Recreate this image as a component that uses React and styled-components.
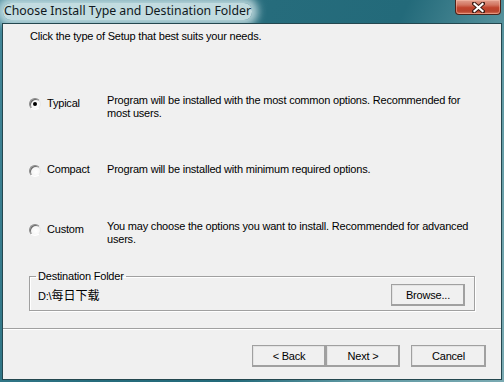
import React from "react";
import styled, { createGlobalStyle } from "styled-components";

const GlobalStyle = createGlobalStyle`
  html, body {
    margin: 0;
    padding: 0;
    overflow: hidden;
  }
  body {
    font-family: "Liberation Sans", Arial, sans-serif;
    font-size: 11px;
    letter-spacing: -0.2px;
    color: #000;
  }
`;

const Frame = styled.div`
  width: 504px;
  height: 382px;
  box-sizing: border-box;
  display: flex;
  flex-direction: column;
  padding: 0 2px 2px 2px;
  background: linear-gradient(115deg, #44889a 0%, #266c7c 40%, #236a7a 60%, #5e98a2 78%, #7aaab2 100%);
`;

const TitleBar = styled.div`
  height: 23px;
  flex: none;
  display: flex;
  align-items: flex-start;
  justify-content: space-between;
  margin: 0 -2px;
`;

const Caption = styled.span`
  margin: 3px 0 0 3px;
  padding: 0 1px;
  height: 17px;
  line-height: 16px;
  font-family: "Noto Sans", "Open Sans", sans-serif;
  font-size: 12.3px;
  letter-spacing: 0;
  color: #101820;
  border-radius: 8px;
  background: rgba(206, 228, 231, 0.92);
  box-shadow: 0 0 8px 6px rgba(206, 228, 231, 0.85);
  white-space: nowrap;
`;

const CloseButton = styled.div`
  width: 46px;
  height: 15px;
  margin-right: 3px;
  box-sizing: border-box;
  display: flex;
  align-items: center;
  justify-content: center;
  border: 1px solid #4d2219;
  border-top: none;
  border-radius: 0 0 4px 4px;
  background: linear-gradient(180deg, #e2a08f 0%, #d27561 35%, #c0442d 55%, #b8432c 80%, #d7755a 100%);
  box-shadow: inset 0 0 0 1px rgba(255, 200, 180, 0.45);
`;

const Client = styled.div`
  flex: 1;
  display: flex;
  flex-direction: column;
  border: 1px solid #24474f;
  background: #f0f0f0;
`;

const Heading = styled.div`
  margin: 6px 0 0 27px;
  line-height: 13px;
  white-space: nowrap;
`;

const Option = styled.div`
  display: flex;
  align-items: flex-start;
  margin: ${(p) => p.$top}px 0 0 26px;
`;

const Radio = styled.span`
  width: 12px;
  height: 12px;
  flex: none;
  box-sizing: border-box;
  margin-top: ${(p) => (p.$multi ? 4 : 2)}px;
  border-radius: 50%;
  border: 1px solid;
  border-color: #8a8a8a #e8e8e8 #ffffff #8a8a8a;
  background: radial-gradient(circle at 60% 60%, #ffffff 0%, #f4f4f4 60%, #d8d8d8 100%);
  box-shadow: inset 1px 1px 0 #6a6a6a;
  display: flex;
  align-items: center;
  justify-content: center;

  &::after {
    content: "";
    width: 4px;
    height: 4px;
    border-radius: 50%;
    background: ${(p) => (p.$checked ? "#000" : "transparent")};
  }
`;

const OptionLabel = styled.span`
  width: 60px;
  flex: none;
  margin: ${(p) => (p.$multi ? 3 : 0)}px 0 0 6px;
  line-height: 13px;
`;

const OptionDesc = styled.div`
  line-height: 13px;
  white-space: nowrap;
`;

const GroupBox = styled.fieldset`
  width: 446px;
  box-sizing: border-box;
  margin: 24px 0 0 26px;
  padding: 1px 9px 4px 8px;
  border: 1px solid #a0a0a0;
  box-shadow: 1px 1px 0 #ffffff, inset 1px 1px 0 #ffffff;
  min-inline-size: 0;
`;

const Legend = styled.legend`
  margin-left: -2px;
  padding: 0 2px;
  line-height: 13px;
`;

const PathRow = styled.div`
  display: flex;
  align-items: center;
  justify-content: space-between;
`;

const PathText = styled.span`
  line-height: 14px;
  white-space: nowrap;

  span {
    font-family: "Noto Sans CJK SC", sans-serif;
    font-size: 12px;
    letter-spacing: 0;
  }
`;

const Button = styled.button`
  width: ${(p) => p.$w || 74}px;
  height: 22px;
  box-sizing: border-box;
  padding: 0;
  font-family: "Liberation Sans", Arial, sans-serif;
  font-size: 11px;
  letter-spacing: -0.2px;
  color: #000;
  background: #f0f0f0;
  border: 1px solid;
  border-color: #ffffff #696969 #696969 #ffffff;
  box-shadow: inset -1px -1px 0 #a0a0a0, inset 1px 1px 0 #e3e3e3;
  outline: 1px solid #a0a0a0;
  outline-offset: -1px;
`;

const Separator = styled.div`
  margin-top: 17px;
  height: 0;
  border-top: 1px solid #a0a0a0;
  border-bottom: 1px solid #ffffff;
`;

const ButtonRow = styled.div`
  display: flex;
  justify-content: flex-end;
  margin-top: 15px;
  padding-right: 15px;
`;

const Spacer = styled.div`
  width: 11px;
`;

const options = [
  {
    label: "Typical",
    checked: true,
    top: 51,
    lines: [
      "Program will be installed with the most common options. Recommended for",
      "most users.",
    ],
  },
  {
    label: "Compact",
    top: 43,
    lines: ["Program will be installed with minimum required options."],
  },
  {
    label: "Custom",
    top: 43,
    lines: [
      "You may choose the options you want to install. Recommended for advanced",
      "users.",
    ],
  },
];

export default function App() {
  return (
    <>
      <GlobalStyle />
      <Frame>
        <TitleBar>
          <Caption>Choose Install Type and Destination Folder</Caption>
          <CloseButton>
            <svg width="13" height="11" viewBox="0 0 13 11">
              <path
                d="M2 1.5 L11 9.5 M11 1.5 L2 9.5"
                stroke="#3a1a14"
                strokeWidth="4"
                strokeLinecap="square"
              />
              <path
                d="M2.5 2 L10.5 9 M10.5 2 L2.5 9"
                stroke="#ffffff"
                strokeWidth="2.2"
                strokeLinecap="square"
              />
            </svg>
          </CloseButton>
        </TitleBar>
        <Client>
          <Heading>Click the type of Setup that best suits your needs.</Heading>
          {options.map((opt) => {
            const multi = opt.lines.length > 1;
            return (
              <Option key={opt.label} $top={opt.top}>
                <Radio $checked={opt.checked} $multi={multi} />
                <OptionLabel $multi={multi}>{opt.label}</OptionLabel>
                <OptionDesc>
                  {opt.lines.map((line) => (
                    <div key={line}>{line}</div>
                  ))}
                </OptionDesc>
              </Option>
            );
          })}
          <GroupBox>
            <Legend>Destination Folder</Legend>
            <PathRow>
              <PathText>
                D:\<span>每日下载</span>
              </PathText>
              <Button>Browse...</Button>
            </PathRow>
          </GroupBox>
          <Separator />
          <ButtonRow>
            <Button>&lt; Back</Button>
            <Button>Next &gt;</Button>
            <Spacer />
            <Button $w={75}>Cancel</Button>
          </ButtonRow>
        </Client>
      </Frame>
    </>
  );
}
